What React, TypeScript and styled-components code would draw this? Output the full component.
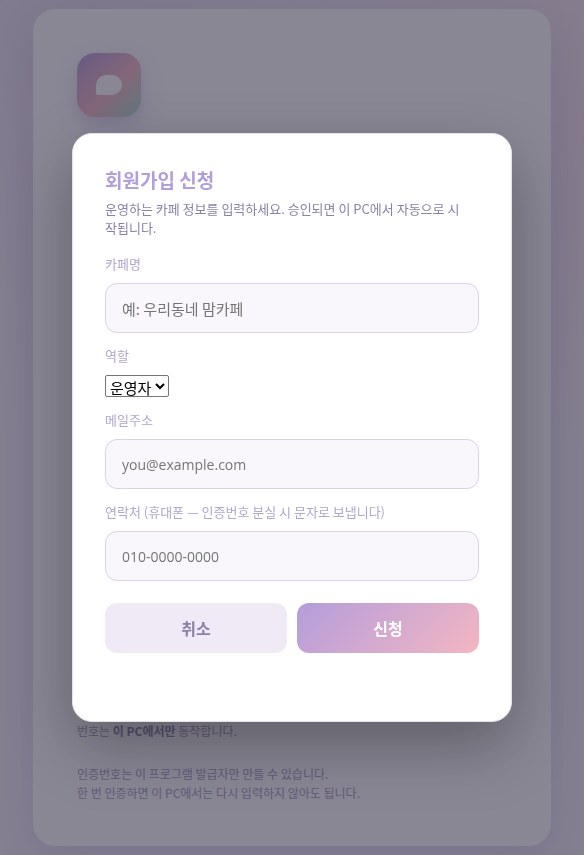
import React from "react";
import styled, { createGlobalStyle } from "styled-components";

const GlobalStyle = createGlobalStyle`
  *, *::before, *::after { box-sizing: border-box; }
  body {
    margin: 0;
    font-family: "Noto Sans CJK KR", "Noto Sans", sans-serif;
    color: #8a82a6;
  }
  input, select, button { font-family: inherit; }
`;

const Page = styled.main`
  min-height: 100vh;
  display: flex;
  justify-content: center;
  padding: 9px 33px;
  background:
    radial-gradient(circle at 15% 0%, rgba(179, 157, 219, 0.16), transparent 45%),
    radial-gradient(circle at 100% 15%, rgba(244, 182, 194, 0.2), transparent 35%),
    #f6f1f6;
`;

const Card = styled.section`
  flex: 1;
  max-width: 520px;
  display: flex;
  flex-direction: column;
  padding: 44px;
  border-radius: 22px;
  background: #fefeff;
  box-shadow: 0 12px 48px rgba(179, 157, 219, 0.4);
`;

const Logo = styled.div`
  display: grid;
  place-items: center;
  width: 64px;
  height: 64px;
  border-radius: 18px;
  background: linear-gradient(135deg, #b39ddb 0%, #f4b6c2 55%, #a8e0cc 100%);
  box-shadow: 0 8px 20px rgba(179, 157, 219, 0.4);
`;

const Bubble = styled.span`
  width: 26px;
  height: 20px;
  border-radius: 10px 10px 10px 2px;
  background: #fff;
`;

const Notes = styled.div`
  display: grid;
  gap: 24px;
  margin-top: auto;
`;

const Note = styled.p`
  margin: 0;
  font-size: 12px;
  line-height: 19px;
  color: #a79dc4;

  strong { color: #9189ad; }
`;

const Overlay = styled.div`
  position: fixed;
  inset: 0;
  display: flex;
  align-items: center;
  justify-content: center;
  padding: 20px;
  background: rgba(40, 36, 60, 0.55);
`;

const Dialog = styled.form`
  width: 100%;
  max-width: 440px;
  padding: 32px;
  border: 1px solid #e6dff2;
  border-radius: 20px;
  background: #fff;
  box-shadow: 0 24px 64px rgba(0, 0, 0, 0.3);
`;

const Title = styled.h1`
  margin: 0;
  font-size: 19px;
  line-height: 28px;
  font-weight: 700;
  color: #b39ddb;
`;

const Description = styled.p`
  margin: 5px 0 18px;
  padding-right: 12px;
  font-size: 13px;
  line-height: 19px;
  word-break: break-all;
`;

const Fields = styled.div`
  display: grid;
  gap: 14px;
`;

const Field = styled.div`
  display: grid;
  justify-items: start;
  gap: 10px;
`;

const Label = styled.label`
  font-size: 13px;
  line-height: 18px;
  color: #b0a7cb;
`;

const TextInput = styled.input<{ $latin?: boolean }>`
  width: 100%;
  height: 50px;
  padding: 0 16px;
  border: 1px solid #dccfea;
  border-radius: 12px;
  background: #f9f7fb;
  font-family: ${(p) => (p.$latin ? '"Open Sans", "Noto Sans CJK KR", sans-serif' : "inherit")};
  font-size: ${(p) => (p.$latin ? 14 : 15)}px;
  color: #5c5478;

  &::placeholder { color: #757575; }
`;

const RoleSelect = styled.select`
  width: 64px;
  height: 22px;
  padding: 0;
  border: 1px solid #767676;
  border-radius: 2px;
  background: #fff;
  font-size: 15px;
  color: #000;
`;

const Actions = styled.div`
  display: grid;
  grid-template-columns: 1fr 1fr;
  gap: 10px;
  margin-top: 22px;
`;

const Button = styled.button<{ $primary?: boolean }>`
  height: 50px;
  border: 0;
  border-radius: 12px;
  background: ${(p) => (p.$primary ? "linear-gradient(135deg, #b39ddb, #f4b6c2)" : "#f0eaf7")};
  color: ${(p) => (p.$primary ? "#fff" : "#8a82a6")};
  font-size: 16px;
  font-weight: 700;
  cursor: pointer;
`;

const Status = styled.div`
  min-height: 20px;
  margin-top: 16px;
  font-size: 12px;
`;

export default function App() {
  return (
    <>
      <GlobalStyle />
      <Page>
        <Card>
          <Logo><Bubble /></Logo>
          <Notes>
            <Note>번호는 <strong>이 PC에서만</strong> 동작합니다.</Note>
            <Note>
              인증번호는 이 프로그램 발급자만 만들 수 있습니다.
              <br />
              한 번 인증하면 이 PC에서는 다시 입력하지 않아도 됩니다.
            </Note>
          </Notes>
        </Card>
      </Page>
      <Overlay>
        <Dialog role="dialog" aria-labelledby="signup-title" onSubmit={(e) => e.preventDefault()}>
          <Title id="signup-title">회원가입 신청</Title>
          <Description>
            운영하는 카페 정보를 입력하세요. 승인되면 이 PC에서 자동으로 시작됩니다.
          </Description>
          <Fields>
            <Field>
              <Label htmlFor="cafe">카페명</Label>
              <TextInput id="cafe" type="text" placeholder="예: 우리동네 맘카페" />
            </Field>
            <Field>
              <Label htmlFor="role">역할</Label>
              <RoleSelect id="role" defaultValue="owner">
                <option value="owner">운영자</option>
              </RoleSelect>
            </Field>
            <Field>
              <Label htmlFor="email">메일주소</Label>
              <TextInput id="email" type="email" placeholder="you@example.com" $latin />
            </Field>
            <Field>
              <Label htmlFor="phone">연락처 (휴대폰 — 인증번호 분실 시 문자로 보냅니다)</Label>
              <TextInput id="phone" type="tel" placeholder="010-0000-0000" $latin />
            </Field>
          </Fields>
          <Actions>
            <Button type="button">취소</Button>
            <Button type="submit" $primary>신청</Button>
          </Actions>
          <Status role="status" />
        </Dialog>
      </Overlay>
    </>
  );
}
